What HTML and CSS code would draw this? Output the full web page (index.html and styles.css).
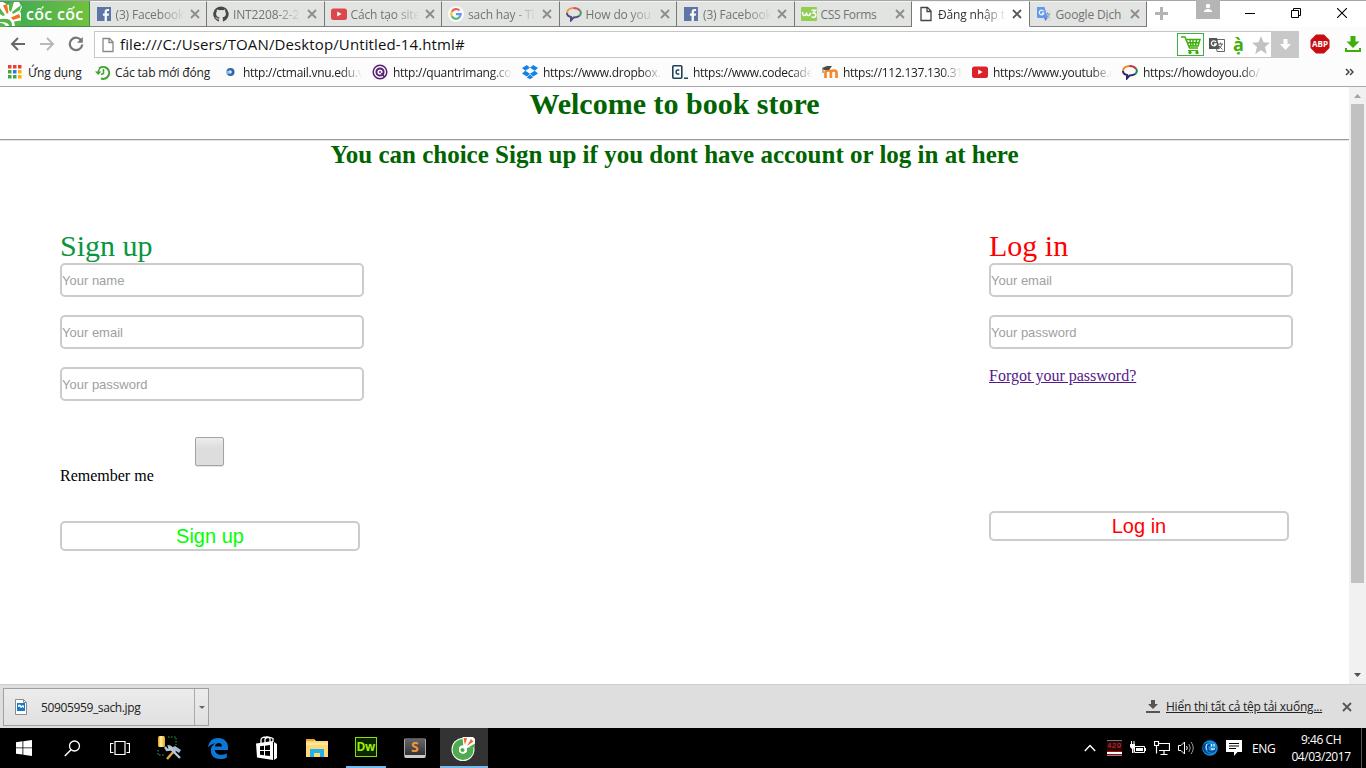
FILE: index.html
```html
<!DOCTYPE html>
<html lang="vi">
<head>
<meta charset="utf-8">
<title>Đăng nhập</title>
<link rel="stylesheet" href="styles.css">
</head>
<body>
<svg width="0" height="0" class="defs">
  <defs>
    <linearGradient id="gold" x1="0" x2="1"><stop offset="0" stop-color="#e79a12"/><stop offset=".4" stop-color="#fff2a0"/><stop offset="1" stop-color="#e8a21a"/></linearGradient>
    <symbol id="fb" viewBox="0 0 16 16"><rect x="1" y="1" width="14" height="14" fill="#3b5998"/><path d="M8.600 15V9.700H6.900V7.600h1.700V6c0-2 1.200-2.900 2.900-2.900h1.600v2h-1c-.9 0-1.200.4-1.200 1.100v1.400h2.200l-.3 2.100h-1.900V15z" fill="#fff"/></symbol>
    <symbol id="x" viewBox="0 0 10 10"><path d="M1 1l8 8m0-8l-8 8" stroke="currentColor" stroke-width="1.800"/></symbol>
    <symbol id="yt" viewBox="0 0 16 16"><rect y="2.500" width="16" height="11.500" rx="2.500" fill="#d9222a"/><path d="M6.200 5.600v5l4.400-2.500z" fill="#fff"/></symbol>
    <symbol id="howdo" viewBox="0 0 16 16"><path d="M1 7c0-3 3-5 7-5" stroke="#f58220" stroke-width="2" fill="none"/><path d="M7.500 2c3 0 5 .8 6.500 2.700" stroke="#c4314b" stroke-width="2" fill="none"/><path d="M14 4.500c1.400 2 .9 4.300-1 5.600" stroke="#168b45" stroke-width="2" fill="none"/><path d="M13 10c-1.800 1.400-4.500 1.500-5.500 1.500L5 14.300v-3.300C2.700 10.500 1 9 1 7" stroke="#30246b" stroke-width="2" fill="none"/></symbol>
    <symbol id="page" viewBox="0 0 16 16"><path d="M3 1.500h6.500L13 5v9.500H3zM9 1.500V5.500h4" fill="#fff" stroke="currentColor" stroke-width="1.300"/></symbol>
    <symbol id="gtrans" viewBox="0 0 16 16"><path d="M6 4h9v11H9z" fill="#ddd"/><path d="M9 8h5m-2.500-1.500V8m2 0c-.5 2-2 3-4 4m1-3l3 3" stroke="#6b8a99" fill="none"/><path d="M1 1h7.500l3 11H2.500Q1 12 1 10.500z" fill="#4285f4"/><path d="M8 12h3.500L9.500 15z" fill="#3367d6"/><path d="M7.600 5.400a2.300 2.300 0 1 0 .2 1.700H5.700" stroke="#fff" stroke-width="1.200" fill="none"/></symbol>
  </defs>
</svg>
<div class="screen">
  <header class="tabs">
    <div class="brand">
      <svg class="brand-mark" width="23" height="26" viewBox="0 0 23 26"><path d="M0 1h3l5 3 5-3h6l3 5-2 5 1 1v13H0z" fill="#fff"/><path d="M9 3l3-2h2l-3 10-2-2z" fill="#55b648"/><path d="M3 4.500l4-1.500 1.500 8.500L7 13z" fill="#f37021"/><path d="M0 7l5 7-2 1-3-2z" fill="#55b648"/><path d="M21 4l-1 5-7 4-1-2z" fill="#55b648"/><path d="M11 16.500l8-3.500 1.500 3.500-7.500 2.500z" fill="#f37021"/><path d="M0 18q7-1 10 1 2 2 2 6H9q0-4-9-4z" fill="#55b648"/><path d="M14 20.500l7-1v5.500h-6z" fill="#55b648"/><path d="M0 22q5 0 6 4H0z" fill="#55b648"/></svg>
      <span class="brand-name">cốc cốc</span>
    </div>
    <div class="tab"><svg class="ico"><use href="#fb"/></svg><span class="tt">(3) Facebook</span><svg class="cl"><use href="#x"/></svg></div>
    <div class="tab"><svg class="ico" viewBox="0 0 16 16"><path d="M8 .4a7.700 7.700 0 0 0-2.500 15c.4.1.5-.2.5-.4v-1.500c-2.100.5-2.600-.9-2.600-.9-.4-.9-.9-1.100-.9-1.100-.7-.5.1-.5.1-.5.800.1 1.200.8 1.200.8.7 1.200 1.800.9 2.300.7.1-.5.300-.9.5-1.100-1.700-.2-3.500-.9-3.500-3.800 0-.8.300-1.500.8-2.100-.1-.2-.3-1 .1-2.100 0 0 .6-.2 2.100.8a7 7 0 0 1 3.800 0c1.500-1 2.100-.8 2.100-.8.4 1.100.2 1.900.1 2.100.5.600.8 1.300.8 2.100 0 2.900-1.800 3.600-3.500 3.800.3.200.5.700.5 1.400V15c0 .2.100.5.500.4A7.700 7.700 0 0 0 8 .4z" fill="#222"/></svg><span class="tt">INT2208-2-2</span><svg class="cl"><use href="#x"/></svg></div>
    <div class="tab"><svg class="ico"><use href="#yt"/></svg><span class="tt">Cách tạo site</span><svg class="cl"><use href="#x"/></svg></div>
    <div class="tab"><svg class="ico" viewBox="0 0 16 16"><circle cx="8" cy="8" r="8" fill="#fff"/><g fill="none" stroke-width="2.100"><path d="M11.500 4.500A4.800 4.800 0 0 0 3.800 5.700" stroke="#ea4335"/><path d="M3.800 5.700a4.800 4.800 0 0 0 0 4.600" stroke="#fbbc05"/><path d="M3.800 10.300a4.800 4.800 0 0 0 7.300 1.300" stroke="#34a853"/><path d="M11.100 11.600A4.800 4.800 0 0 0 12.700 8.100H8" stroke="#4285f4"/></g></svg><span class="tt">sach hay - Tì</span><svg class="cl"><use href="#x"/></svg></div>
    <div class="tab"><svg class="ico"><use href="#howdo"/></svg><span class="tt">How do you</span><svg class="cl"><use href="#x"/></svg></div>
    <div class="tab"><svg class="ico"><use href="#fb"/></svg><span class="tt">(3) Facebook</span><svg class="cl"><use href="#x"/></svg></div>
    <div class="tab"><svg class="ico" viewBox="0 0 16 16"><rect y="1" width="16" height="14" rx="1" fill="#7fc832"/><path d="M1.500 6q0 3.500 2 3.500T5.500 6.500q0 3 2 3t2-3M10.500 4.300h4L12.300 7q2.500 0 2.500 2t-2.300 2.500l-2-.7" fill="none" stroke="#fff" stroke-width="1.600"/></svg><span class="tt">CSS Forms</span><svg class="cl"><use href="#x"/></svg></div>
    <div class="tab active"><svg class="ico"><use href="#page"/></svg><span class="tt">Đăng nhập t</span><svg class="cl"><use href="#x"/></svg></div>
    <div class="tab"><svg class="ico"><use href="#gtrans"/></svg><span class="tt">Google Dịch</span><svg class="cl"><use href="#x"/></svg></div>
    <svg class="plus" width="13" height="13" viewBox="0 0 13 13"><path d="M6.500 0v13M0 6.500h13" stroke="#b4b4b4" stroke-width="3"/></svg>
    <div class="user"><svg width="10" height="10" viewBox="0 0 10 10"><circle cx="5" cy="3" r="2.200" fill="#fff"/><path d="M1 9V8q1-2 4-2t4 2v1z" fill="#fff"/></svg></div>
    <div class="winbtns">
      <svg width="10" height="10"><path d="M0 5.500h10" stroke="#000"/></svg>
      <svg width="10" height="10"><path d="M.5 2.500h7v7h-7zM2.500 2.500v-2h7v7h-2" fill="none" stroke="#000"/></svg>
      <svg width="10" height="10"><path d="M0 0l10 10M10 0L0 10" stroke="#000" stroke-width="1.100"/></svg>
    </div>
  </header>

  <div class="toolbar">
    <div class="nav">
      <svg width="16" height="16" viewBox="0 0 16 16"><path d="M15 8H2M8 2L2 8l6 6" fill="none" stroke="#696969" stroke-width="2"/></svg>
      <svg width="16" height="16" viewBox="0 0 16 16"><path d="M1 8h13M8 2l6 6-6 6" fill="none" stroke="#b8b8b8" stroke-width="2"/></svg>
      <svg width="16" height="16" viewBox="0 0 16 16"><path d="M13.500 5A6.200 6.200 0 1 0 14.200 8.500" fill="none" stroke="#777" stroke-width="2.200"/><path d="M14.800 1v5.800H9z" fill="#777"/></svg>
    </div>
    <div class="address">
      <svg class="pageicon" width="16" height="16"><use href="#page"/></svg>
      <span class="url">file:///C:/Users/TOAN/Desktop/Untitled-14.html#</span>
      <div class="actions">
        <div class="cart"><svg width="20" height="20" viewBox="0 0 20 20"><path d="M0 2h4l4.500 11H17M5 4.500h14l-2 6.500H7.500M9 5l1 6M12 5v6M15.500 5l-1 6M6 7.800h12" fill="none" stroke="#3fae0a" stroke-width="1.500"/><path d="M7 15.500h10" stroke="#3fae0a"/><circle cx="9" cy="17.500" r="1.700" fill="#3fae0a"/><circle cx="16" cy="17.500" r="1.700" fill="#3fae0a"/></svg></div>
        <svg class="tr" width="16" height="16" viewBox="0 0 16 16"><path d="M6.500 2.500h9v12H8z" fill="#fff" stroke="#666"/><path d="M9 7h5m-2.500-1.500V7m1.500 0q-1 4-4 5m1-3l3.500 3.500" fill="none" stroke="#666"/><path d="M0 1h8l2.500 11H0z" fill="#555"/><path d="M7 5A2.500 2.500 0 1 0 7.300 7H5" fill="none" stroke="#fff" stroke-width="1.300"/></svg>
        <b class="accent">ạ̀</b>
        <svg class="star" width="18" height="18" viewBox="0 0 18 18"><path d="M9 0l2.500 6.300 6.500.4-5 4.300 1.800 7L9 14.200 3.200 18 5 11 0 6.700l6.500-.4z" fill="#c2c2c2"/></svg>
        <div class="down"><svg width="11" height="13" viewBox="0 0 11 13"><path d="M3.500 1h4v5H11l-5.500 6L0 6h3.500z" fill="#fff"/></svg></div>
      </div>
    </div>
    <svg class="abp" width="20" height="20" viewBox="0 0 20 20"><path d="M6 .5h8L19.500 6v8L14 19.500H6L.5 14V6z" fill="#c70d12"/><text x="10" y="13.200" text-anchor="middle" textLength="16" lengthAdjust="spacingAndGlyphs" class="abptext">ABP</text></svg>
    <svg class="dl" width="16" height="16" viewBox="0 0 16 16"><path d="M5.500 0h5v5.500h4L8 12 1.500 5.500h4z" fill="#3fae0a"/><path d="M1 12v3h14v-3" fill="none" stroke="#3fae0a" stroke-width="2"/></svg>
  </div>

  <nav class="bookmarks">
    <div class="bm apps"><svg width="14" height="14" viewBox="0 0 14 14"><path d="M0 0h3.500v3.500H0zM5 0h3.500v3.500H5zM10 0h3.500v3.500H10z" fill="#e8402e"/><path d="M0 5h3.500v3.500H0z" fill="#3fa845"/><path d="M5 5h3.500v3.500H5z" fill="#3577e0"/><path d="M10 5h3.500v3.500H10z" fill="#f5b400"/><path d="M0 10h3.500v3.500H0zM5 10h3.500v3.500H5z" fill="#3fa845"/><path d="M10 10h3.500v3.500H10z" fill="#f5b400"/></svg><span>Ứng dụng</span></div>
    <div class="bm recent"><svg width="15" height="15" viewBox="0 0 15 15"><path d="M4 3.500A6 6 0 1 1 6 13.500" fill="none" stroke="#41a332" stroke-width="2"/><path d="M0 6.500h6.500L3.200 10z" fill="#41a332"/><path d="M3.200 8q0-2.500 1.300-4M8.500 4v4.500L6 9.500" fill="none" stroke="#41a332" stroke-width="1.500"/></svg><span>Các tab mới đóng</span></div>
    <div class="bm wide"><svg class="ico" viewBox="0 0 16 16"><circle cx="8.500" cy="8" r="4" fill="#2b68a8"/><circle cx="8" cy="8" r="1.800" fill="#d6ebff"/><path d="M4 6l4 2-3 3z" fill="#93bde0"/></svg><span>http://ctmail.vnu.edu.v</span></div>
    <div class="bm wide"><svg class="ico" viewBox="0 0 16 16"><circle cx="8" cy="8" r="6.800" fill="none" stroke="#571f73" stroke-width="1.500"/><circle cx="8" cy="8" r="3.600" fill="none" stroke="#571f73" stroke-width="2"/><circle cx="8" cy="8" r="1" fill="#571f73"/><path d="M9.500 9l3 4" stroke="#571f73" stroke-width="1.500"/></svg><span>http://quantrimang.co</span></div>
    <div class="bm wide"><svg class="ico" viewBox="0 0 16 16"><path d="M4.800 1L0 4l3.300 2.700L8 3.800zM11.200 1L16 4l-3.300 2.700L8 3.800zM0 9.400l4.800 3L8 9.700 3.300 6.800zM16 9.400l-4.800 3L8 9.700l4.700-2.900zM4.800 13.200L8 10.600l3.200 2.600L8 15.200z" fill="#1382e8"/></svg><span>https://www.dropbox.</span></div>
    <div class="bm wide"><svg class="ico" viewBox="0 0 16 16"><rect x=".8" y="1.800" width="9" height="12.500" rx="1" fill="none" stroke="#1f4056" stroke-width="1.600"/><path d="M7.300 6.300q-3.200-1.300-3.200 1.700t3.200 1.700" fill="none" stroke="#1f4056" stroke-width="1.500"/><path d="M12 14.200h4" stroke="#1f4056" stroke-width="1.500"/></svg><span>https://www.codecade</span></div>
    <div class="bm wide"><svg class="ico" viewBox="0 0 16 16"><path d="M3.500 14V8.500q0-2 2.700-2t2.700 2V14M8.900 8.500q0-2 2.800-2t2.800 2V14" fill="none" stroke="#f5892b" stroke-width="2.700"/><path d="M0 4l5-2h5L7 6H2z" fill="#4b4b4b"/><path d="M1 4v5" stroke="#666"/></svg><span>https://112.137.130.31</span></div>
    <div class="bm wide"><svg class="ico"><use href="#yt"/></svg><span>https://www.youtube.c</span></div>
    <div class="bm wide"><svg class="ico"><use href="#howdo"/></svg><span>https://howdoyou.do/</span></div>
    <svg class="more" width="9" height="8" viewBox="0 0 9 8"><path d="M1 1l3 3-3 3M5 1l3 3-3 3" fill="none" stroke="#444" stroke-width="1.500"/></svg>
  </nav>

  <div class="viewport">
    <main class="doc">
      <h1>Welcome to book store</h1>
      <hr>
      <h2>You can choice Sign up if you dont have account or log in at here</h2>
      <div class="forms">
        <form class="form signup">
          <div class="title">Sign up</div>
          <input placeholder="Your name">
          <input placeholder="Your email">
          <input placeholder="Your password">
          <div class="check"></div>
          <div class="remember">Remember me</div>
          <button type="button">Sign up</button>
        </form>
        <form class="form login">
          <div class="title">Log in</div>
          <input placeholder="Your email">
          <input placeholder="Your password">
          <a href="#">Forgot your password?</a>
          <button type="button">Log in</button>
        </form>
      </div>
    </main>
    <div class="scroll">
      <svg width="17" height="17"><path d="M5 11l3.500-4 3.500 4z" fill="#a3a3a3"/></svg>
      <div class="thumb"></div>
      <svg class="bottom" width="17" height="17"><path d="M5 6h7l-3.500 4z" fill="#505050"/></svg>
    </div>
  </div>

  <div class="downloads">
    <div class="item">
      <svg width="12" height="16" viewBox="0 0 12 16"><path d="M.5.5h8l3 3v12H.5z" fill="#fff" stroke="#8b8b8b"/><path d="M8.500.5v3h3" fill="none" stroke="#8b8b8b"/><rect x="2" y="4" width="8" height="8" fill="#1878d0"/><path d="M3 6l2-.5 1.500 1.500L8 6l1 1v2L7.500 8 6 9 4.500 7.500 3 8z" fill="#fff"/></svg>
      <span class="file">50905959_sach.jpg</span>
      <div class="arrow"><svg width="6" height="3"><path d="M0 0h6L3 3z" fill="#666"/></svg></div>
    </div>
    <div class="all">
      <svg width="14" height="13" viewBox="0 0 14 13"><path d="M5 0h4v4h3L7 9 2 4h3zM0 11h14v2H0z" fill="#555"/></svg>
      <span class="show">Hiển thị tất cả tệp tải xuống...</span>
      <svg class="cl"><use href="#x"/></svg>
    </div>
  </div>

  <footer class="taskbar">
    <div class="cell"><svg width="16" height="16" viewBox="0 0 16 16"><path d="M0 2.200l6.500-.9v6.200H0zM7.300 1.200L16 0v7.500H7.300zM0 8.300h6.500v6.300L0 13.700zM7.300 8.300H16V16l-8.700-1.200z" fill="#fff"/></svg></div>
    <div class="cell"><svg width="17" height="17" viewBox="0 0 17 17"><circle cx="10.500" cy="6" r="5" fill="none" stroke="#fff" stroke-width="1.300"/><path d="M7 9.800L.8 16" stroke="#fff" stroke-width="1.500"/></svg></div>
    <div class="cell"><svg width="20" height="14" viewBox="0 0 20 14"><path d="M5 .5h10v13H5zM3.500 2.500h-3v9h3M16.500 2.500h3v9h-3" fill="none" stroke="#fff" stroke-width="1.200"/></svg></div>
    <div class="cell gap"><svg width="24" height="24" viewBox="0 0 24 24"><rect x="1" y="0" width="7" height="11" rx="1.500" fill="url(#gold)"/><path d="M11 1h8v8M1 14v5h7" fill="none" stroke="#35a64a" stroke-dasharray="1.500 1.500"/><path d="M10 23l8-9" stroke="#e0a94a" stroke-width="2.500"/><path d="M14 12l4-2 6 4-2 3-3-2-2 2z" fill="#a9bace"/><path d="M8 11l2 3 3-.5L12 10.500q3 .5 3 3.500l8 8" fill="none" stroke="#b8c9dc" stroke-width="2.300"/></svg></div>
    <div class="cell gap"><svg width="20" height="21" viewBox="0 0 20 21"><path d="M0 9.500C.8 3 5 0 10.500 0 16 0 20 4 20 9v3H6.800c.2 3 2.800 4.800 6.300 4.800 2 0 4-.5 5.700-1.500v4.200C17 20.500 15 21 12.200 21 6.500 21 2.800 17.500 2.800 12.500c0-3 1.500-5.500 4.500-7C4.500 5.700 2 7 0 9.500zM6.900 8.500H14C14 6.200 12.800 5 10.700 5 8.700 5 7.300 6.300 6.900 8.500z" fill="#0a78d6"/></svg></div>
    <div class="cell gap"><svg width="22" height="24" viewBox="0 0 22 24"><path d="M5 7V4q0-3 5-3 4-1 4 2.500V6M9 7V3q3-3 8-.5V6" fill="none" stroke="#fff" stroke-width="1.300"/><path d="M0 7.500L17 5v19L1 21.500zM18 6l3 2v14l-3 2z" fill="#fff"/><path d="M4 10.200l4-.4V14H4zM9 9.700l5-.6V14H9zM4 15h4v4.200l-4-.4zM9 15h5v5l-5-.6z" fill="#000"/></svg></div>
    <div class="cell gap"><svg width="22" height="18" viewBox="0 0 22 18"><path d="M0 0h8l2 2h12v16H0z" fill="#ffd974"/><path d="M0 0h8v2H0z" fill="#e9a728"/><path d="M0 5h22" stroke="#ffe9a6" stroke-width="2"/><path d="M4 10h14v8h-4v-4H8v4H4z" fill="#1fb2ec"/></svg></div>
    <div class="cell gap open"><div class="dw">Dw</div></div>
    <div class="cell gap"><div class="subl">S</div></div>
    <div class="cell gap open current"><svg width="25" height="25" viewBox="0 0 25 25"><circle cx="12" cy="13.500" r="11.500" fill="#fff"/><circle cx="12" cy="13.500" r="7.300" fill="none" stroke="#4eac4e" stroke-width="6.500"/><circle cx="12" cy="13.500" r="4" fill="#fff"/><circle cx="11.500" cy="14" r="2" fill="#4eac4e"/><path d="M12.500 12.500L11.500 1H22l2 2v7.500z" fill="#fff"/><path d="M14 9l-1.500-7h3.500zM16 10l4-7 2.500 2.500z" fill="#ef6a2e"/><path d="M17 11.500l7-4v4z" fill="#4eac4e"/></svg></div>
    <div class="tray">
      <div class="ti"><svg width="12" height="8" viewBox="0 0 12 8"><path d="M.8 7L6 1.500 11.200 7" fill="none" stroke="#fff" stroke-width="1.400"/></svg></div>
      <div class="ti"><div class="temp">429</div></div>
      <div class="ti"><svg width="16" height="14" viewBox="0 0 16 14"><path d="M4.500 5.500h10v6h-10z" fill="none" stroke="#fff"/><path d="M6 7h7v3H6zM15 7h1v3h-1zM0 3h5v3L3.500 8v4H2V8L0 6zM1 0h1v3H1zM3.500 0h1v3h-1z" fill="#fff"/></svg></div>
      <div class="ti"><svg width="16" height="14" viewBox="0 0 16 14"><path d="M5 2.500h10.500v7H5M.5.500h4v4h-4zM2.500 4.500v8M10 10v3M6.500 13.500h7" fill="none" stroke="#fff" stroke-width="1.200"/></svg></div>
      <div class="ti"><svg width="16" height="14" viewBox="0 0 16 14"><path d="M.5 4.500H3l3.500-3.500v12L3 9.500H.5z" fill="none" stroke="#fff"/><path d="M8.500 5q1.500 2 0 4" fill="none" stroke="#fff"/><path d="M10.800 3q3 4 0 8M13 1q4.500 6 0 12" fill="none" stroke="#999"/></svg></div>
      <div class="ti"><svg width="16" height="16" viewBox="0 0 16 16"><circle cx="8" cy="8" r="7.800" fill="#148de0"/><path d="M8 2Q2.500 3 3 8t6 6q-6 1-8-5T8 2z" fill="#043b80"/><path d="M8 5q-3 0-2.500 3.500T10 12q3 0 3.500-4" fill="none" stroke="#063f86" stroke-width="1.600"/><path d="M5 4q-2 3 0 6" fill="none" stroke="#bdeaff"/><path d="M9.500 4v2.500M12 4v2.500M9 8.500q2 1.500 4 0" stroke="#fff" fill="none" stroke-width="1.100"/></svg></div>
      <div class="ti"><svg width="16" height="16" viewBox="0 0 16 16"><path d="M0 0h16v12h-4.500L8 16v-4H0z" fill="#fff"/><path d="M3 3.500h10M3 6h10M3 8.500h7" stroke="#000"/></svg></div>
      <span class="lang">ENG</span>
      <div class="clock"><span>9:46 CH</span><span>04/03/2017</span></div>
      <div class="peek"></div>
    </div>
  </footer>
</div>
</body>
</html>
```
FILE: styles.css
```css
* { box-sizing: border-box; }
body { margin: 0; font-family: "Open Sans", "Noto Sans", sans-serif; font-size: 12px; color: #222; overflow: hidden; background: #fff; }
svg { display: block; flex: none; }
.defs { position: absolute; }
.screen { width: 1366px; height: 768px; display: flex; flex-direction: column; }
.ico { width: 16px; height: 16px; }
.cl { width: 10px; height: 10px; color: #8c8c8c; }

.tabs { height: 27px; display: flex; flex: none; background: #fff; border-top: 1px solid #a5a5a5; }
.brand { width: 89.500px; height: 26px; display: flex; align-items: center; background: linear-gradient(90deg, #35a853, #72c13e); border-bottom: 1px solid #3c9148; border-right: 1px solid #3c9148; flex: none; }
.brand-name { color: #fff; font: 600 16px/26px "Open Sans", sans-serif; margin-left: 3px; white-space: nowrap; letter-spacing: .3px; }
.tab { width: 117.500px; height: 26px; display: flex; align-items: center; flex: none; padding-left: 6px; background: #e2e4e1; border-right: 1px solid #777; border-bottom: 1px solid #808080; border-top: 1px solid #f5f5f5; color: #737373; }
.tab .ico { opacity: .8; }
.tt { margin-left: 4px; width: 73px; margin-right: 1px; white-space: nowrap; font-size: 12px; letter-spacing: -.15px; -webkit-mask-image: linear-gradient(90deg, #000 60%, transparent 94%); mask-image: linear-gradient(90deg, #000 60%, transparent 94%); }
.tab.active { background: #fff; border-bottom-color: #fff; color: #333; }
.tab.active .ico { opacity: 1; color: #444; }
.tab.active .cl { color: #555; }
.tab:nth-child(8) .tt, .tab:nth-child(10) .tt { -webkit-mask-image: none; mask-image: none; }
.tab:nth-child(8) .tt { letter-spacing: -.35px; }
.plus { margin: 6px 0 0 8px; }
.user { width: 24px; height: 19px; margin: -1px 0 0 28px; background: #b5b5b5; display: flex; justify-content: center; padding-top: 3px; }
.winbtns { display: flex; gap: 36px; margin: 7px 0 0 25px; }

.toolbar { height: 31px; flex: none; display: flex; align-items: center; background: #fcfcfc; }
.nav { display: flex; gap: 13px; padding-left: 10px; margin-top: 3px; width: 94px; flex: none; }
.address { width: 1205px; height: 27px; margin-top: 4px; border: 1px solid #c6c6c6; background: #fff; display: flex; align-items: center; flex: none; }
.pageicon { margin-left: 5px; color: #888; }
.url { font-size: 15px; line-height: 20px; color: #111; margin-left: 4px; margin-top: -1px; letter-spacing: .120px; }
.actions { margin-left: auto; display: flex; align-items: center; height: 27px; }
.cart { width: 27px; height: 23px; border: 1px solid #3fae49; display: flex; justify-content: center; padding-top: 1px; }
.tr { margin-left: 5px; }
.accent { color: #3fae0a; font: 700 18px/20px "Open Sans", sans-serif; width: 11px; margin: -2px 0 0 8px; }
.star { margin-left: 8px; }
.down { width: 28px; height: 27px; background: #c8c8c8; display: flex; align-items: center; justify-content: center; margin-left: 1px; margin-right: -1px; }
.abp { margin: 3px 0 0 11px; }
.abptext { font: 700 8px "Open Sans", sans-serif; fill: #fff; }
.dl { margin: 3px 0 0 15px; }

.bookmarks { height: 29px; flex: none; background: #fcfcfc; border-bottom: 1px solid #a9a9a9; display: flex; align-items: center; padding-left: 8px; }
.bm { display: flex; align-items: center; white-space: nowrap; flex: none; height: 28px; letter-spacing: -.15px; }
.apps { width: 87px; gap: 6px; }
.recent { width: 127px; gap: 5px; }
.wide { width: 150px; gap: 5px; letter-spacing: -.270px; }
.wide span { width: 124px; -webkit-mask-image: linear-gradient(90deg, #000 79%, transparent 96%); mask-image: linear-gradient(90deg, #000 79%, transparent 96%); }
.more { margin-left: 73px; }

.viewport { display: flex; height: 597px; flex: none; }
.doc { width: 1349px; font: 16px "Liberation Serif", "Times New Roman", serif; color: #000; }
.doc h1 { margin: 0; font-size: 30px; line-height: 34px; text-align: center; color: #006400; height: 52px; }
.doc hr { margin: 0; border: 0; border-top: 1px solid #999; border-bottom: 1px solid #e4e4e4; height: 2px; }
.doc h2 { margin: 0; font-size: 25px; line-height: 28px; text-align: center; color: #006400; }
.forms { display: flex; justify-content: space-between; padding: 60px 56px 0 60px; }
.form { width: 304px; display: flex; flex-direction: column; align-items: flex-start; }
.title { font-size: 30px; line-height: 34px; height: 34px; }
.signup .title { color: #0a9540; }
.login .title { color: #f00; }
.form input { width: 304px; height: 34px; padding: 0; border: 2px solid #ccc; border-radius: 5px; font: 13px "Liberation Sans", Arial, sans-serif; margin: 0 0 18px; outline: none; }
.form input::placeholder { color: #a0a0a0; opacity: 1; }
.check { width: 29px; height: 29px; margin: 18px 0 1px 135px; border: 1px solid #a3a3a3; border-radius: 2px; background: linear-gradient(#ededed, #ddd 38%, #ddd); box-shadow: 0 1px 1px #e4e4e4; }
.remember { line-height: 18px; }
.form button { width: 300px; height: 30px; padding: 0; border: 2px solid #ccc; border-radius: 5px; background: #fff; font: 20px/24px "Liberation Sans", Arial, sans-serif; }
.signup button { color: #0f0; margin-top: 36px; }
.login button { color: #f00; margin-top: 126px; }
.login a { color: #551a8b; line-height: 18px; }
.scroll { width: 17px; height: 597px; background: #f1f1f1; display: flex; flex-direction: column; align-items: center; }
.thumb { width: 13px; height: 479px; background: #c1c1c1; }
.bottom { margin-top: auto; }

.downloads { height: 44px; flex: none; background: #dedede; border-top: 1px solid #d0d0d0; display: flex; justify-content: space-between; }
.item { width: 206px; height: 38px; margin: 3px 0 0 3px; border: 1px solid #a0a0a0; background: linear-gradient(#ececec, #e0e0e0); display: flex; align-items: center; padding-left: 11px; }
.file { margin-left: 14px; font-size: 12px; letter-spacing: -.370px; }
.arrow { margin-left: auto; width: 14px; height: 36px; border-left: 1px solid #aaa; display: flex; align-items: center; justify-content: center; }
.all { display: flex; align-items: center; padding-right: 14px; }
.show { margin-left: 6px; width: 156px; text-decoration: underline; white-space: nowrap; letter-spacing: -.230px; }
.all .cl { margin-left: 20px; color: #555; }

.taskbar { height: 40px; flex: none; background: #000; display: flex; color: #fff; }
.cell { width: 48px; height: 40px; display: flex; align-items: center; justify-content: center; flex: none; }
.gap { margin-left: 1.140px; }
.open { background: linear-gradient(#76b9ed, #76b9ed) 50% 100% / 40px 2px no-repeat; }
.current { background: linear-gradient(#76b9ed, #76b9ed) 0 100% / 48px 2px no-repeat #333; }
.dw { width: 22px; height: 20px; border: 1px solid #8ee000; background: #0b2600; color: #9bf000; font: 700 12px/17px "Open Sans", sans-serif; text-align: center; margin-bottom: 3px; letter-spacing: -.5px; }
.subl { width: 22px; height: 20px; border: 1px solid #aaa; border-top-color: #555; border-bottom: 3px solid #ccc; border-radius: 2px; background: linear-gradient(#666, #333); color: #f5923a; font: 700 14px/15px "Open Sans", sans-serif; text-align: center; }
.tray { margin-left: auto; display: flex; align-items: center; height: 40px; }
.ti { width: 24px; display: flex; justify-content: center; }
.temp { width: 15px; height: 16px; border-top: 1px solid #777; border-bottom: 1px solid #888; background: linear-gradient(#220a0a 0 10px, #b00 10px 11px, #fff 11px 13px, #a00 13px); color: #d8242a; font: 8px/9px "Liberation Mono", monospace; text-align: center; }
.lang { margin-left: 6px; width: 24px; font-size: 12px; letter-spacing: -.4px; }
.clock { width: 70px; margin-left: 10px; display: flex; flex-direction: column; align-items: center; font-size: 12px; line-height: 17px; letter-spacing: -.450px; margin-top: -1px; }
.peek { width: 1px; height: 40px; background: #555; margin: 0 4px 0 5px; }
```
